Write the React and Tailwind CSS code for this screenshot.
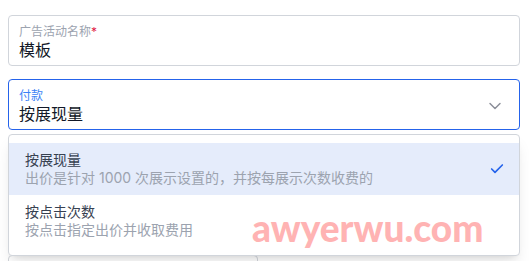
import { Check, ChevronDown } from "lucide-react";

const options = [
  {
    title: "按展现量",
    desc: "出价是针对 1000 次展示设置的，并按每展示次数收费的",
    selected: true,
  },
  {
    title: "按点击次数",
    desc: "按点击指定出价并收取费用",
    selected: false,
  },
];

export default function App() {
  return (
    <div
      className="relative h-[261px] overflow-hidden bg-white"
      style={{ fontFamily: 'Inter, "Noto Sans CJK SC", sans-serif' }}
    >
      <div className="ml-2 w-[512px] pt-[15px]">
        {/* Campaign name */}
        <div className="rounded border border-[#d1d5db] px-2.5 pt-2 pb-[5px]">
          <div className="text-xs leading-4 text-[#9ca3af]">
            广告活动名称<span className="text-[#e11d48]">*</span>
          </div>
          <div className="text-base leading-5 text-[#111827]">模板</div>
        </div>

        {/* Payment select */}
        <div className="relative mt-[13px]">
          <div className="flex items-center rounded border border-[#2563eb] pr-3.5 pl-2.5 pt-2 pb-[5px]">
            <div className="flex-1">
              <div className="text-xs leading-4 text-[#3b82f6]">付款</div>
              <div className="text-base leading-5 text-[#111827]">按展现量</div>
            </div>
            <ChevronDown className="h-5 w-5 text-[#8b8f99]" strokeWidth={1.75} />
          </div>

          {/* Dropdown menu */}
          <div className="absolute top-[55px] left-0 z-10 w-full rounded border border-[#d1d5db] bg-white py-2 shadow-lg">
            {options.map((o) => (
              <div
                key={o.title}
                className={`flex items-center px-4 py-2 ${o.selected ? "bg-[#e5ecfb]" : ""}`}
              >
                <div className="flex-1">
                  <div className="text-sm leading-[18px] text-[#374151]">{o.title}</div>
                  <div className="text-sm leading-[18px] text-[#9ca3af]">{o.desc}</div>
                </div>
                {o.selected && (
                  <Check className="mr-[-2px] h-4 w-4 text-[#2563eb]" strokeWidth={2.5} />
                )}
              </div>
            ))}
          </div>
        </div>

        {/* Next field, covered by the menu */}
        <div className="mt-[125px] h-4 w-[250px] rounded border border-[#d1d5db]" />
      </div>

      {/* Watermark */}
      <div
        className="pointer-events-none absolute top-[206px] left-[252px] z-20 text-[37px] leading-[44px] font-black text-[#ffb3b3]"
        style={{ fontFamily: "Lato, sans-serif" }}
      >
        awyerwu.com
      </div>
    </div>
  );
}
